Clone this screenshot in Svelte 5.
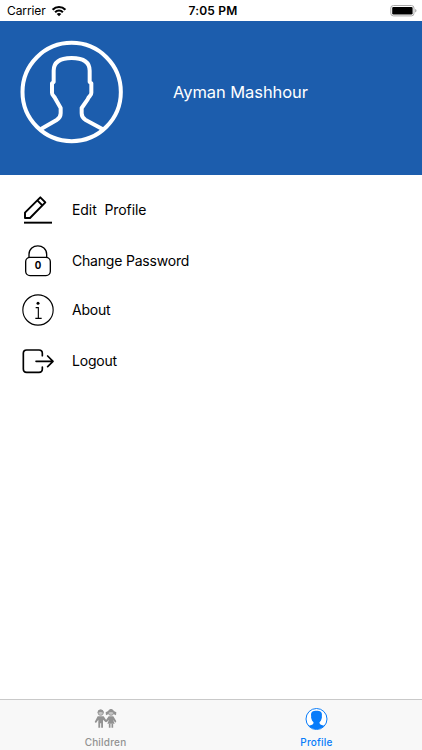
<script>
	const menu = [
		{ id: 'edit', label: 'Edit\u00a0 Profile' },
		{ id: 'password', label: 'Change Password' },
		{ id: 'about', label: 'About' },
		{ id: 'logout', label: 'Logout' }
	];

	let name = 'Ayman Mashhour';
	let activeTab = 'profile';
</script>

<div class="screen">
	<div class="status">
		<div class="carrier">
			<span>Carrier</span>
			<svg width="16" height="12" viewBox="0 0 16 12">
				<g fill="none" stroke="#000" stroke-width="2.2">
					<path d="M1.6 4.7C5.2 1.1 10.8 1.1 14.4 4.7" />
					<path d="M4.1 7.2C6.3 5.1 9.7 5.1 11.9 7.2" />
				</g>
				<path d="M8 11.2L5.7 8.9C7 7.8 9 7.8 10.3 8.9Z" />
			</svg>
		</div>
		<span class="time">7:05 PM</span>
		<svg class="battery" width="27" height="12" viewBox="0 0 27 12">
			<rect x="0.8" y="0.5" width="23.2" height="10.4" rx="2.6" fill="#fff" stroke="#a9a9a9" />
			<rect x="2.2" y="1.9" width="20.4" height="7.6" rx="1.2" />
			<path d="M25.1 4Q26.5 4.4 26.5 5.7T25.1 7.4Z" fill="#a9a9a9" />
		</svg>
	</div>

	<header>
		<svg class="avatar" width="104" height="104" viewBox="30 30 312 312">
			<g fill="none" stroke="#fff" stroke-width="12" stroke-linejoin="round">
				<circle cx="185" cy="186" r="147.5" />
				<path d="M93 297L140 270Q152 263 152 250V234L137 208C133 196 126 199 126 188V160L131 156V122C131 95 150 84 185 84S239 95 239 122V156L244 160V188C244 199 237 196 233 208L215 234V250Q215 263 227 270L277 297" />
			</g>
		</svg>
		<h1>{name}</h1>
	</header>

	<ul class="menu">
		{#each menu as item}
			<li class={item.id}>
				{#if item.id === 'edit'}
					<svg width="32" height="32" viewBox="36 27 96 96">
						<g fill="none" stroke="#000" stroke-width="5.8" stroke-linejoin="round">
							<path d="M45 99V83L91 37L106 52L60 99Z" />
							<path d="M82 46L97 61" />
							<path d="M42 113H126" />
						</g>
					</svg>
				{:else if item.id === 'password'}
					<svg width="32" height="32" viewBox="36 21 96 96">
						<g fill="none" stroke="#000" stroke-width="4">
							<rect x="47" y="58" width="74" height="55" rx="13" />
							<path d="M57 58V49C57 15 110 15 110 49V58" />
						</g>
						<text x="84" y="94" text-anchor="middle">0</text>
					</svg>
				{:else if item.id === 'about'}
					<svg width="32" height="32" viewBox="36 17 96 96">
						<g fill="none" stroke="#000" stroke-width="3.4">
							<circle cx="84" cy="65" r="45.5" />
							<path d="M77 58H85V90M76 90H95" />
						</g>
						<circle cx="84" cy="45" r="4.5" />
					</svg>
				{:else}
					<svg width="32" height="32" viewBox="36 19 96 96">
						<g fill="none" stroke="#000" stroke-width="5" stroke-linecap="round" stroke-linejoin="round">
							<path d="M97 51V44Q97 34 87 34H50Q40 34 40 44V91Q40 101 50 101H87Q97 101 97 91V85" />
							<path d="M78 68H128M113 52L129 68L113 84" />
						</g>
					</svg>
				{/if}
				<span>{item.label}</span>
			</li>
		{/each}
	</ul>

	<nav>
		<div class="tab" class:active={activeTab === 'children'}>
			<svg width="24" height="24" viewBox="72 42 72 72">
				<g fill="currentColor">
					<path d="M83 70H101L110 83L107 88L99 80V88H85V80L78 90L74 87Z" />
					<path d="M85 87H99V104H93.5V91H90.5V104H85Z" />
					<path d="M116 53L107 58L108 67L116 63ZM130 53L139 58L138 67L130 63Z" />
					<path d="M116 70H130L139 85L136 89L129 80L134 92H112L117 80L110 88L106 84Z" />
					<path d="M116.5 92H121.5V104H116.5ZM124.5 92H129.5V104H124.5Z" />
				</g>
				<g fill="#c4c4c4" stroke="currentColor" stroke-width="2.5">
					<circle cx="92" cy="59" r="8" />
					<circle cx="123" cy="59" r="8" />
				</g>
				<path d="M83 60C82 46 102 46 101 60Q92 54 83 60ZM114 60C113 44 133 44 132 60Q123 54 114 60Z" fill="currentColor" />
			</svg>
			<span>Children</span>
		</div>
		<div class="tab" class:active={activeTab === 'profile'}>
			<svg width="24" height="24" viewBox="73.5 39 72 72">
				<circle cx="108" cy="75" r="31.5" fill="#fff" stroke="currentColor" stroke-width="3" />
				<path d="M84 95Q98 93 99 87V85Q94 80 93 75Q91 70 92 67C90 53 97 50 108 50S126 53 124 67Q125 70 123 75Q122 80 117 85V87Q118 93 132 95Q122 105 108 105T84 95Z" fill="currentColor" />
			</svg>
			<span>Profile</span>
		</div>
	</nav>
</div>

<style>
	:global(body) {
		margin: 0;
		background: #fff;
	}

	.screen {
		display: flex;
		flex-direction: column;
		height: 750px;
		font-family: Inter, 'Liberation Sans', sans-serif;
		color: #000;
	}

	.status {
		display: grid;
		grid-template-columns: 1fr auto 1fr;
		align-items: center;
		height: 21px;
		padding: 0 5px 0 7px;
		box-sizing: border-box;
		font-size: 12px;
	}

	.carrier {
		display: flex;
		align-items: center;
		gap: 5px;
		letter-spacing: -0.1px;
	}

	.time {
		margin-left: 2px;
		font-weight: 600;
		letter-spacing: 0.2px;
	}

	.battery {
		justify-self: end;
	}

	header {
		display: flex;
		height: 154px;
		padding: 19px 20px 0;
		box-sizing: border-box;
		background: #1c5dad;
	}

	h1 {
		margin: 0 0 0 49px;
		font-size: 16.5px;
		font-weight: 400;
		line-height: 105px;
		letter-spacing: -0.07px;
		color: #fff;
	}

	.menu {
		flex: 1;
		margin: 0;
		padding: 19px 22px 0;
		list-style: none;
	}

	li {
		display: flex;
		align-items: center;
		gap: 18px;
		height: 32px;
		margin-bottom: 19px;
		font-size: 14px;
		letter-spacing: -0.2px;
	}

	li span {
		margin-top: -1px;
	}

	.edit {
		letter-spacing: -0.07px;
	}

	.password {
		margin-bottom: 17px;
	}

	text {
		font-size: 29px;
		font-weight: 700;
		letter-spacing: 0;
	}

	nav {
		display: flex;
		height: 51px;
		box-sizing: border-box;
		border-top: 1px solid #c9c9c9;
		background: #f8f8f8;
	}

	.tab {
		display: flex;
		flex: 1;
		flex-direction: column;
		align-items: center;
		padding-top: 7px;
		font-size: 10px;
		font-weight: 500;
		line-height: 12px;
		letter-spacing: 0.2px;
		color: #929292;
	}

	.tab span {
		margin-top: 5px;
	}

	.active {
		color: #087cfa;
	}
</style>
